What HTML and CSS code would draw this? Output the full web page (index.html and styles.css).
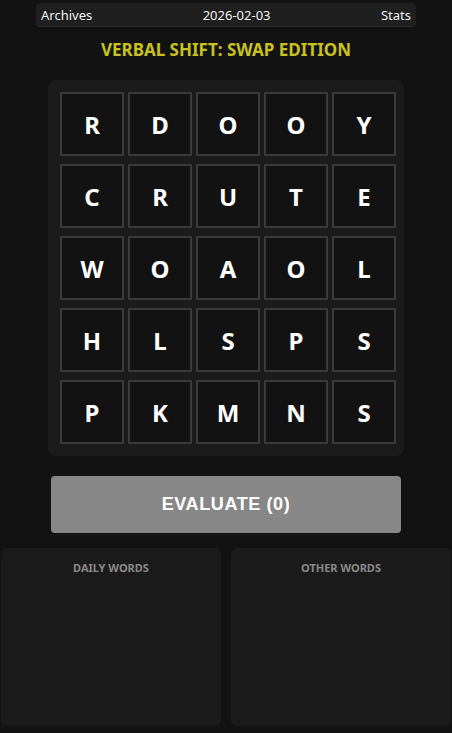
FILE: index.html
```html
<!DOCTYPE html>
<html lang="en">
<head>
<meta charset="utf-8">
<title>Verbal Shift: Swap Edition</title>
<link rel="stylesheet" href="styles.css">
</head>
<body>
<div class="page">
  <header class="topbar">
    <span class="link">Archives</span>
    <span class="date">2026-02-03</span>
    <span class="link">Stats</span>
  </header>
  <h1 class="title">VERBAL SHIFT: SWAP EDITION</h1>
  <div class="board">
    <div class="grid">
      <div class="tile">R</div><div class="tile">D</div><div class="tile">O</div><div class="tile">O</div><div class="tile">Y</div>
      <div class="tile">C</div><div class="tile">R</div><div class="tile">U</div><div class="tile">T</div><div class="tile">E</div>
      <div class="tile">W</div><div class="tile">O</div><div class="tile">A</div><div class="tile">O</div><div class="tile">L</div>
      <div class="tile">H</div><div class="tile">L</div><div class="tile">S</div><div class="tile">P</div><div class="tile">S</div>
      <div class="tile">P</div><div class="tile">K</div><div class="tile">M</div><div class="tile">N</div><div class="tile">S</div>
    </div>
  </div>
  <button class="evaluate">EVALUATE (0)</button>
  <div class="panels">
    <section class="panel"><h2 class="panel-title">DAILY WORDS</h2></section>
    <section class="panel"><h2 class="panel-title">OTHER WORDS</h2></section>
  </div>
</div>
</body>
</html>
```

FILE: styles.css
```css
html, body {
  margin: 0;
  padding: 0;
  background: #121212;
}
body {
  font-family: "Noto Sans", "Open Sans", sans-serif;
  color: #ffffff;
}
.page {
  width: 452px;
  display: flex;
  flex-direction: column;
  align-items: center;
}
.topbar {
  box-sizing: border-box;
  width: 380px;
  height: 24px;
  margin-top: 3px;
  padding: 0 5px;
  display: flex;
  justify-content: space-between;
  align-items: center;
  background: #1f1f1f;
  border-radius: 4px;
  border-bottom: 1px solid #2a2a2a;
  font-size: 13px;
  color: #f2f2f2;
}
.title {
  margin: 11px 0 0 0;
  height: 24px;
  line-height: 24px;
  font-size: 17px;
  font-weight: 700;
  color: #c9c21e;
}
.board {
  box-sizing: border-box;
  width: 356px;
  margin-top: 18px;
  padding: 12px 8px 12px 12px;
  background: #1b1b1b;
  border-radius: 8px;
}
.grid {
  display: grid;
  grid-template-columns: repeat(5, 64px);
  grid-auto-rows: 64px;
  column-gap: 4px;
  row-gap: 8px;
}
.tile {
  box-sizing: border-box;
  border: 2px solid #3a3a3a;
  background: #121212;
  display: flex;
  align-items: center;
  justify-content: center;
  font-size: 24px;
  font-weight: 700;
  color: #ffffff;
}
.evaluate {
  box-sizing: border-box;
  width: 350px;
  height: 57px;
  margin-top: 20px;
  border: none;
  border-radius: 4px;
  background: #878787;
  color: #ffffff;
  font-family: "Liberation Sans", Arial, sans-serif;
  font-size: 18px;
  font-weight: 700;
  letter-spacing: 0.6px;
}
.panels {
  box-sizing: border-box;
  width: 452px;
  padding: 0 1px;
  margin-top: 15px;
  display: flex;
  gap: 10px;
}
.panel {
  flex: 1;
  height: 178px;
  background: #1b1b1b;
  border-radius: 6px;
}
.panel-title {
  margin: 12px 0 0 0;
  text-align: center;
  font-size: 11px;
  font-weight: 700;
  color: #8a8a8a;
}
```
